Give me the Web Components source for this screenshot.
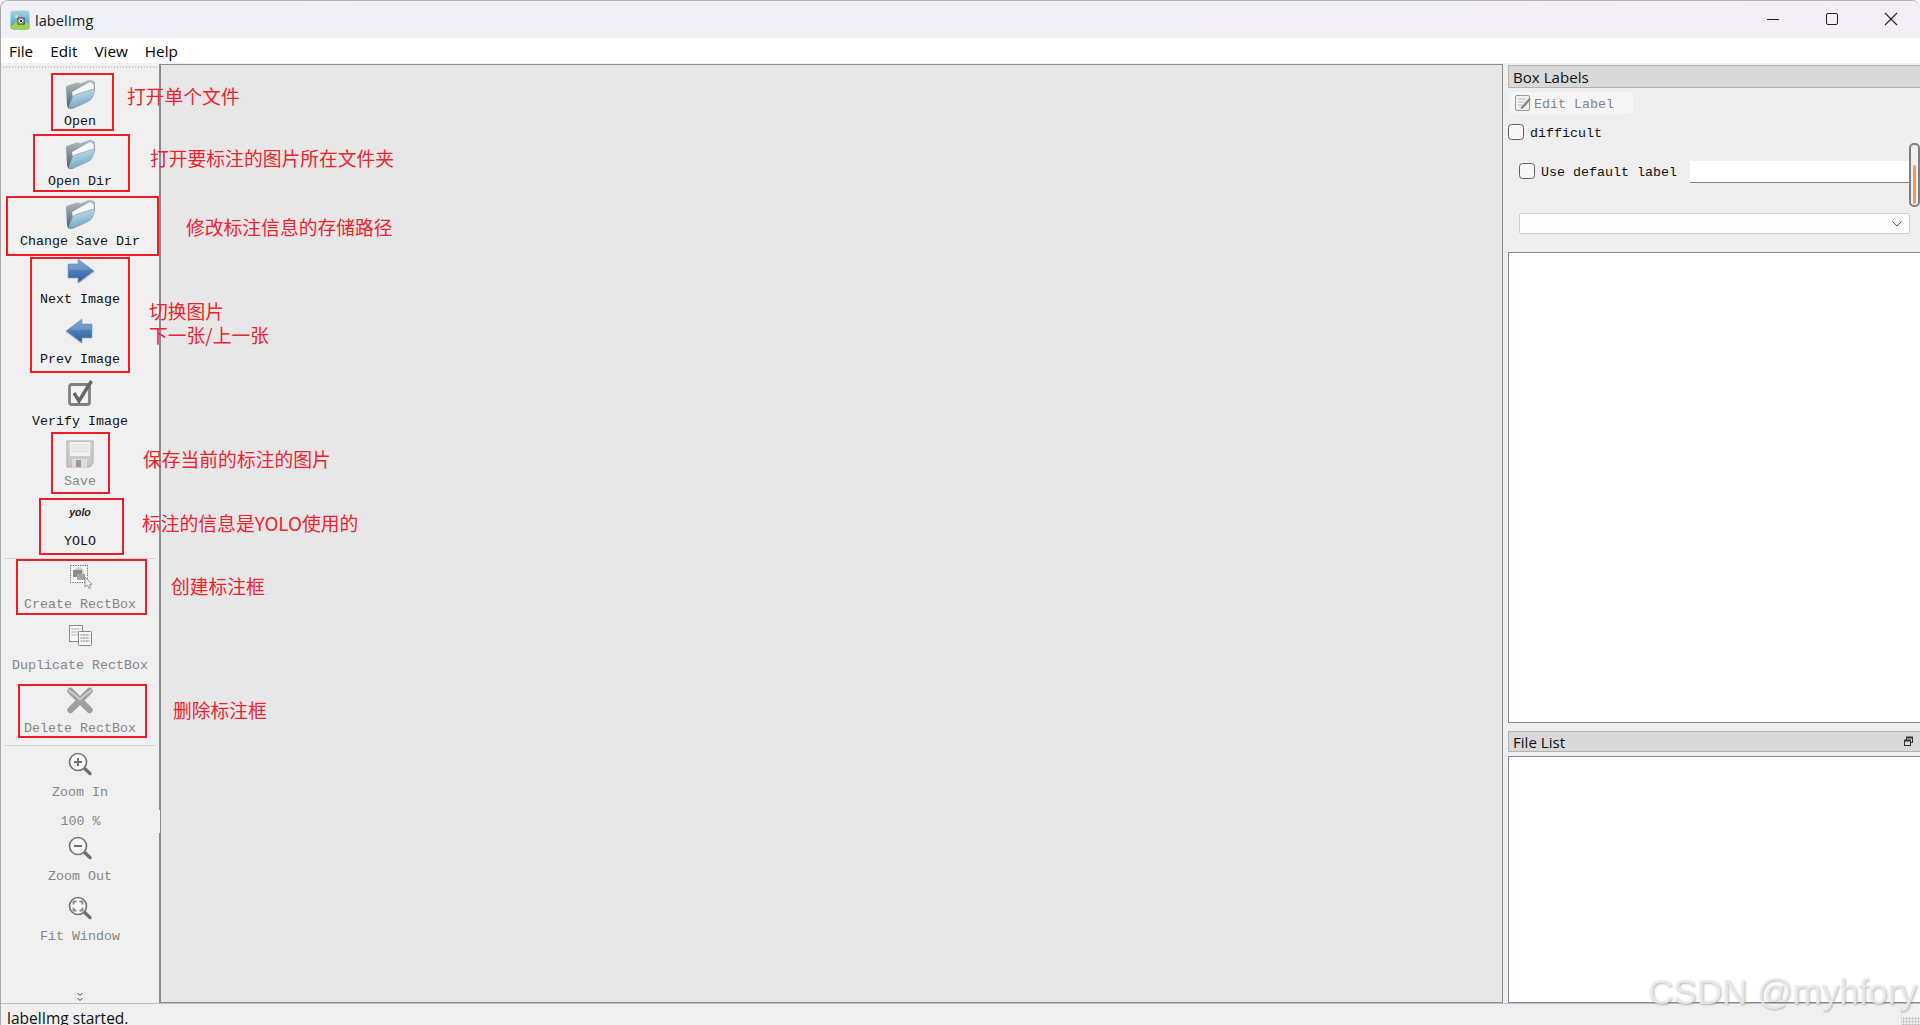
<!DOCTYPE html>
<html lang="zh"><head><meta charset="utf-8"><title>labelImg</title>
<style>
html,body{margin:0;height:100%;background:#fff;overflow:hidden}
body{font-family:"Open Sans","Noto Sans",sans-serif;color:#000}
</style></head><body>
<template id="t-app">
<style>
:host{display:flex;flex-direction:column;height:1025px;width:1920px;box-sizing:border-box;border-top:1px solid #b4b4b4;border-left:1px solid #a8a8a8;border-radius:8px 8px 0 0;overflow:hidden;position:relative;background:#f0f0f0}
.main{display:flex;flex:1;min-height:0}
</style>
<slot name="top"></slot><div class="main"><slot name="main"></slot></div><slot name="bottom"></slot><slot></slot>
</template>
<script>
const MAG=`<path d="M19.500 19.500 26 25.500" stroke="#6f6f6f" stroke-width="3.400" stroke-linecap="round"/><circle cx="14" cy="14" r="8.500" fill="#f7f7f7" stroke="#777" stroke-width="1.700"/>`;
const ICONS={
folder:`<defs><linearGradient id="b" x1="0" y1="0" x2="0.3" y2="1"><stop offset="0" stop-color="#d4e6f0"/><stop offset="1" stop-color="#6fa5c6"/></linearGradient><linearGradient id="g" x1="0" y1="0" x2="0" y2="1"><stop offset="0" stop-color="#b4bfc5"/><stop offset="1" stop-color="#4f5f68"/></linearGradient></defs>
<path d="M2 11Q2 8.500 5 8L13 5.500Q15 5 16 6.500L26 2.500 31 5 31 13 8 31.800Q3.500 32.500 3 28Z" fill="url(#g)"/><path d="M8 15 26 5 29.500 7 30 13 9 21Z" fill="#f6f8f8"/><path d="M7 32Q4 32.500 5 29L8 21Q9 18.500 12 17.500L28 12.500Q31.500 11.500 30.500 14.500L28 21Q27 23 24 24.500L10 31Z" fill="url(#b)" stroke="#7c97a6" stroke-width=".6"/>`,
next:`<defs><linearGradient id="a" x1="0" y1="0" x2="0" y2="1"><stop offset="0" stop-color="#6f9fd6"/><stop offset="1" stop-color="#2a5a9c"/></linearGradient></defs><path d="M5 12H15V6L31 17 15 29V23H5Z" fill="#000" opacity=".12"/><path d="M4 9H14V4L30 16 14 28V23H4Z" fill="url(#a)" stroke="#8aa3c2" stroke-width=".7"/><path d="M5 10H15L15 6 27 15H5Z" fill="#fff" opacity=".14"/>`,
prev:`<defs><linearGradient id="a" x1="0" y1="0" x2="0" y2="1"><stop offset="0" stop-color="#6f9fd6"/><stop offset="1" stop-color="#2a5a9c"/></linearGradient></defs><path d="M27 12H17V6L1 17 17 29V23H27Z" fill="#000" opacity=".12"/><path d="M28 9H18V4L2 16 18 28V23H28Z" fill="url(#a)" stroke="#8aa3c2" stroke-width=".7"/><path d="M27 10H17L17 6 5 15H27Z" fill="#fff" opacity=".14"/>`,
verify:`<rect x="5.500" y="7.500" width="20" height="20" rx="2.500" fill="#f3f3f3" stroke="#808080" stroke-width="2.800"/><path d="M10 16 15 24 27.500 4" fill="none" stroke="#666" stroke-width="3.400"/>`,
save:`<defs><linearGradient id="a" x1="0" y1="0" x2="0" y2="1"><stop offset="0" stop-color="#d6d6d6"/><stop offset="1" stop-color="#c4c4c4"/></linearGradient></defs><path d="M3 4H29V26L26 30H3Z" fill="url(#a)" stroke="#ababab"/><rect x="6" y="5" width="20" height="14" fill="#f2f2f2"/><path d="M7 8H25M7 11H25M7 14H25" stroke="#d8d8d8"/><rect x="8" y="22" width="15" height="8" fill="#ddd"/><rect x="12" y="23" width="5" height="7" fill="#999"/>`,
create:`<rect x="6.500" y="5.500" width="17" height="17" fill="#fbfbfb" stroke="#666" stroke-dasharray="1.200 1.200"/><circle cx="15" cy="12" r="5" fill="#d2d2d2"/><rect x="9" y="10" width="9" height="7" fill="#8c8c8c"/><rect x="13" y="14" width="8" height="6" fill="#a5a5a5"/><path d="M21 17V27L23.500 25 25 28.500 26.800 27.700 25.400 24.600 28 24.300Z" fill="#f5f5f5" stroke="#808080" stroke-width=".8"/>`,
duplicate:`<rect x="5.500" y="4.500" width="13" height="16" fill="#f6f6f6" stroke="#8b8b8b"/><path d="M7.500 8H16.500M7.500 11H16.500M7.500 14H16.500" stroke="#9c9c9c" stroke-dasharray="2 .7"/><rect x="14.500" y="10.500" width="13" height="14" rx="1" fill="#f8f8f8" stroke="#888"/><path d="M16.500 14H25.500M16.500 17H25.500M16.500 20H25.500" stroke="#777" stroke-dasharray="2 .7"/>`,
del:`<path d="M6.500 7 25.500 26M25.500 7 6.500 26" stroke="#a0a0a0" stroke-width="6.400" stroke-linecap="round"/><path d="M5 6.500 16 15 27 6.500" fill="none" stroke="#cdcdcd" stroke-width="2" stroke-linecap="round"/>`,
zin:MAG+`<path d="M14 10V18M10 14H18" stroke="#707070" stroke-width="2"/>`,
zout:MAG+`<path d="M10 14H18" stroke="#707070" stroke-width="2"/>`,
fit:MAG+`<path d="M9.500 12.500V9.500H12.500M15.500 9.500H18.500V12.500M18.500 15.500V18.500H15.500M12.500 18.500H9.500V15.500" fill="none" stroke="#8c8c8c" stroke-width="1.800"/>`
};
class LmIcon extends HTMLElement{connectedCallback(){if(this.shadowRoot)return;const s=this.attachShadow({mode:"open"});
s.innerHTML=`<style>:host{display:block;width:32px;height:32px}svg{display:block}</style><svg width="32" height="32" viewBox="0 0 32 32">${ICONS[this.getAttribute("name")]||""}</svg>`}}
customElements.define("lm-icon",LmIcon);

customElements.define("lm-app",class extends HTMLElement{constructor(){super();this.attachShadow({mode:"open"}).appendChild(document.getElementById("t-app").content.cloneNode(true))}});

customElements.define("lm-titlebar",class extends HTMLElement{constructor(){super();this.attachShadow({mode:"open"}).innerHTML=`<style>
:host{display:flex;align-items:center;height:37px;background:linear-gradient(90deg,#f0f1f7,#f2f0f7 50%,#f4eef6);padding-left:9px;font-size:14.67px;color:#1a1a1a;flex:none}
.t{margin-left:5px;flex:1}.btns{display:flex;width:177px;height:37px}
.btns div{flex:1;display:flex;align-items:center;justify-content:center;padding-bottom:1px}
svg{display:block}</style>
<svg width="20" height="20" viewBox="0 0 20 20"><defs><linearGradient id="s" x1="0" y1="0" x2="0" y2="1"><stop offset="0" stop-color="#a8d4ec"/><stop offset="1" stop-color="#3f93bf"/></linearGradient></defs><rect x=".5" y=".5" width="19" height="19" rx="3" fill="url(#s)"/><path d="M1 16 8 10 14 15 17 12 19.500 14V19.500H3Q1 19.500 1 17Z" fill="#a0cf52"/><circle cx="6.500" cy="6.500" r="1.400" fill="#f2e86a"/><rect x="8" y="8" width="6" height="6" fill="#fff" stroke="#333" stroke-width="1"/><path d="M9.500 9.500 12.500 12.500M12.500 9.500 9.500 12.500" stroke="#222"/></svg>
<span class="t"><slot></slot></span>
<div class="btns"><div><svg width="14" height="14"><path d="M1 7.500H13" stroke="#222" stroke-width="1"/></svg></div>
<div><svg width="14" height="14"><rect x="1.500" y="1.500" width="11" height="11" rx="1.500" fill="none" stroke="#222" stroke-width="1"/></svg></div>
<div><svg width="14" height="14"><path d="M1 1 13 13M13 1 1 13" stroke="#222" stroke-width="1.100"/></svg></div></div>`}});

customElements.define("lm-menubar",class extends HTMLElement{constructor(){super();this.attachShadow({mode:"open"}).innerHTML=`<style>
:host{display:flex;align-items:center;height:25px;background:#fff;padding-left:8px;gap:17px;font-size:15.300px;flex:none}
</style><slot></slot>`}});

customElements.define("lm-toolbar",class extends HTMLElement{constructor(){super();this.attachShadow({mode:"open"}).innerHTML=`<style>
:host{display:flex;flex-direction:column;width:158px;flex:none;background:#f0f0f0;padding-top:3px;box-sizing:border-box;height:100%;font:13.33px "Liberation Mono",monospace}
.h{height:2px;margin:0 2px;background-image:linear-gradient(90deg,#c4c4c4 50%,transparent 50%);background-size:3px 2px;flex:none}
.c{margin-top:auto;height:11px;display:flex;justify-content:center}
</style><div class="h"></div><slot></slot><div class="c"><svg width="8" height="10"><path d="M1.500 1 4 3.500 6.500 1M1.500 6 4 8.500 6.500 6" fill="none" stroke="#444"/></svg></div>`}});

customElements.define("lm-tool",class extends HTMLElement{connectedCallback(){if(this.shadowRoot)return;const h=this.getAttribute("h"),dis=this.hasAttribute("disabled");
this.attachShadow({mode:"open"}).innerHTML=`<style>
:host{display:flex;flex-direction:column;justify-content:flex-end;align-items:center;height:${h}px;flex:none;color:${dis?"#858585":"#111"}}
.i{height:32px;width:32px;margin-bottom:6px}.l{height:14px;line-height:14px;white-space:nowrap}
</style><div class="i"><slot></slot></div><div class="l">${this.getAttribute("label")}</div>`}});

customElements.define("lm-sep",class extends HTMLElement{constructor(){super();this.attachShadow({mode:"open"}).innerHTML=`<style>
:host{display:block;height:10px;margin:0 3px 0 3px;box-sizing:border-box;border-bottom:1px solid #d4d4d4;flex:none}</style>`}});

customElements.define("lm-spin",class extends HTMLElement{constructor(){super();this.attachShadow({mode:"open"}).innerHTML=`<style>
:host{display:flex;align-items:center;justify-content:center;height:23px;margin:10px -1px -1px 0;position:relative;z-index:1;background:#f0f0f0;border-top:1px solid #f3f3f3;border-bottom:1px solid #f3f3f3;box-sizing:border-box;color:#858585;flex:none}
</style><slot></slot>`}});

customElements.define("lm-canvas",class extends HTMLElement{constructor(){super();this.attachShadow({mode:"open"}).innerHTML=`<style>
:host{display:block;flex:none;width:1344px;box-sizing:border-box;margin-top:1px;background:#e7e7e7;border:1px solid #878b94;border-left-width:2px}
</style>`}});

customElements.define("lm-side",class extends HTMLElement{constructor(){super();this.attachShadow({mode:"open"}).innerHTML=`<style>
:host{display:flex;flex-direction:column;flex:1;min-width:0;box-sizing:border-box;padding:2px 0 0 5px;background:#efefef;font:13.33px "Liberation Mono",monospace}
</style><slot></slot>`}});

customElements.define("lm-dock",class extends HTMLElement{connectedCallback(){if(this.shadowRoot)return;
this.attachShadow({mode:"open"}).innerHTML=`<style>
:host{display:flex;flex-direction:column;position:relative}
:host([grow]){flex:1;min-height:0}
.t{height:23px;box-sizing:border-box;background:#d9d9d9;border:1px solid #b2b2b2;border-right:0;display:flex;align-items:center;padding-left:4px;font:15.100px "Open Sans",sans-serif;color:#111;flex:none}
.f{position:absolute;right:6px;top:5px}
:host([float]) .t{height:21px}
:host(:not([float])) .f{display:none}
</style><div class="t">${this.getAttribute("title-text")}<svg class="f" width="11" height="11"><rect x="3.500" y="1.500" width="6" height="5" fill="none" stroke="#333"/><path d="M3 1.500H10" stroke="#333" stroke-width="2"/><rect x="1.500" y="4.500" width="6" height="5" fill="#d9d9d9" stroke="#333"/><path d="M1 4.500H8" stroke="#333" stroke-width="2"/></svg></div><slot></slot>`}});

customElements.define("lm-edit-button",class extends HTMLElement{constructor(){super();this.attachShadow({mode:"open"}).innerHTML=`<style>
:host{display:flex;align-items:center;box-sizing:border-box;width:123px;height:22px;margin:4px 0 0 2px;background:#f6f6f6;border-radius:4px;padding-left:4px;color:#858585;flex:none}
svg{margin-right:2px}span{padding-top:2px}</style>
<svg width="18" height="18" viewBox="0 0 18 18"><rect x="1.500" y="1.500" width="14" height="15" rx="1.500" fill="#f2f2f2" stroke="#999"/><path d="M4 5H12M4 8H10M4 11H8" stroke="#bbb"/><path d="M7 13 15 4 17 5.500 9 14.500 6.500 15Z" fill="#8a8a8a"/></svg><span><slot></slot></span>`}});

customElements.define("lm-check",class extends HTMLElement{constructor(){super();this.attachShadow({mode:"open"}).innerHTML=`<style>
:host{display:flex;align-items:center;gap:6px;color:#111;flex:none}
.b{width:16px;height:16px;box-sizing:border-box;border:1px solid #5f5f5f;border-radius:3.500px;background:#f7f7f7;flex:none}
span{padding-top:2px}
</style><div class="b"></div><span><slot></slot></span>`}});

customElements.define("lm-field",class extends HTMLElement{constructor(){super();this.attachShadow({mode:"open"}).innerHTML=`<style>
:host{display:block;box-sizing:border-box;background:#fff;border-bottom:1px solid #808080;height:22px}
</style>`}});

customElements.define("lm-combo",class extends HTMLElement{constructor(){super();this.attachShadow({mode:"open"}).innerHTML=`<style>
:host{display:flex;align-items:center;justify-content:flex-end;box-sizing:border-box;height:21px;background:#fdfdfd;border:1px solid #cfcfcf;border-radius:2px;padding-right:6px}
</style><svg width="12" height="8"><path d="M1.500 1.500 6 6 10.500 1.500" fill="none" stroke="#555"/></svg>`}});

customElements.define("lm-list",class extends HTMLElement{constructor(){super();this.attachShadow({mode:"open"}).innerHTML=`<style>
:host{display:block;flex:1;min-height:0;box-sizing:border-box;background:#fff;border:1px solid #858896;border-right:0}
</style>`}});

customElements.define("lm-status",class extends HTMLElement{constructor(){super();this.attachShadow({mode:"open"}).innerHTML=`<style>
:host{display:block;position:relative;height:22px;flex:none;box-sizing:border-box;border-top:1px solid #bdbdbd;background:#f0f0f0;padding-left:6px;font-size:15.500px;line-height:28px;overflow:hidden;color:#111}
.g{position:absolute;right:0;bottom:0;width:18px;height:8px;background-image:radial-gradient(#bbb 45%,transparent 50%);background-size:3px 3px}
.v{position:absolute;right:18px;bottom:0;top:3px;width:1px;background:#dedede}
</style><slot></slot><div class="v"></div><div class="g"></div>`}});

customElements.define("lm-box",class extends HTMLElement{connectedCallback(){if(this.shadowRoot)return;const [x,y,w,h]=this.getAttribute("r").split(" ").map(Number);
this.attachShadow({mode:"open"}).innerHTML=`<style>:host{position:absolute;left:${x-1}px;top:${y-1}px;width:${w}px;height:${h}px;box-sizing:border-box;border:2px solid #ee1c25;z-index:5}</style>`}});

customElements.define("lm-note",class extends HTMLElement{connectedCallback(){if(this.shadowRoot)return;const [x,y]=this.getAttribute("p").split(" ");
this.attachShadow({mode:"open"}).innerHTML=`<style>:host{position:absolute;left:${x-1}px;top:${y-14}px;height:24px;font:18.800px/24px "Noto Sans CJK SC","Noto Sans",sans-serif;color:#f0222e;white-space:nowrap;z-index:5}</style><slot></slot>`}});

customElements.define("lm-watermark",class extends HTMLElement{constructor(){super();this.attachShadow({mode:"open"}).innerHTML=`<style>:host{position:absolute;right:3px;bottom:13px;font:35px "Liberation Sans",sans-serif;color:rgba(238,238,238,.85);text-shadow:1px 1px 2px rgba(120,120,120,.5);white-space:nowrap;z-index:6}</style><slot></slot>`}});
</script>

<lm-app>
  <lm-titlebar slot="top">labelImg</lm-titlebar>
  <lm-menubar slot="top"><span>File</span><span>Edit</span><span>View</span><span>Help</span></lm-menubar>
  <lm-toolbar slot="main">
    <lm-tool h="61" label="Open"><lm-icon name="folder"></lm-icon></lm-tool>
    <lm-tool h="60" label="Open Dir"><lm-icon name="folder"></lm-icon></lm-tool>
    <lm-tool h="60" label="Change Save Dir"><lm-icon name="folder"></lm-icon></lm-tool>
    <lm-tool h="58" label="Next Image"><lm-icon name="next"></lm-icon></lm-tool>
    <lm-tool h="60" label="Prev Image"><lm-icon name="prev"></lm-icon></lm-tool>
    <lm-tool h="62" label="Verify Image"><lm-icon name="verify"></lm-icon></lm-tool>
    <lm-tool h="60" label="Save" disabled><lm-icon name="save"></lm-icon></lm-tool>
    <lm-tool h="60" label="YOLO"><span style="display:block;text-align:center;font:italic bold 10.5px/30px 'Liberation Sans',sans-serif;color:#222">yolo</span></lm-tool>
    <lm-sep></lm-sep>
    <lm-tool h="53" label="Create RectBox" disabled><lm-icon name="create"></lm-icon></lm-tool>
    <lm-tool h="61" label="Duplicate RectBox" disabled><lm-icon name="duplicate"></lm-icon></lm-tool>
    <lm-tool h="63" label="Delete RectBox" disabled><lm-icon name="del"></lm-icon></lm-tool>
    <lm-sep></lm-sep>
    <lm-tool h="54" label="Zoom In" disabled><lm-icon name="zin"></lm-icon></lm-tool>
    <lm-spin>100 %</lm-spin>
    <lm-tool h="52" label="Zoom Out" disabled><lm-icon name="zout"></lm-icon></lm-tool>
    <lm-tool h="60" label="Fit Window" disabled><lm-icon name="fit"></lm-icon></lm-tool>
  </lm-toolbar>
  <lm-canvas slot="main"></lm-canvas>
  <lm-side slot="main">
    <lm-dock grow title-text="Box Labels">
      <lm-edit-button>Edit Label</lm-edit-button>
      <lm-check style="margin-top:10px;height:16px">difficult</lm-check>
      <div style="display:flex;align-items:flex-start;margin:21px 10px 0 11px;height:22px">
        <lm-check style="margin-top:2px;height:16px">Use default label</lm-check>
        <lm-field style="margin-left:13px;flex:1"></lm-field>
      </div>
      <lm-combo style="margin:30px 10px 0 11px"></lm-combo>
      <lm-list style="margin-top:18px"></lm-list>
    </lm-dock>
    <lm-dock float title-text="File List" style="height:272px;margin-top:8px">
      <lm-list style="margin-top:4px"></lm-list>
    </lm-dock>
  </lm-side>
  <lm-status slot="bottom">labelImg started.</lm-status>

  <lm-box r="51 73 63 58"></lm-box>
  <lm-box r="33 134 97 58"></lm-box>
  <lm-box r="6 196 153 60"></lm-box>
  <lm-box r="30 257 100 116"></lm-box>
  <lm-box r="51 432 59 62"></lm-box>
  <lm-box r="39 498 85 57"></lm-box>
  <lm-box r="16 559 131 56"></lm-box>
  <lm-box r="18 684 129 54"></lm-box>
  <lm-note p="127 97">打开单个文件</lm-note>
  <lm-note p="150 159">打开要标注的图片所在文件夹</lm-note>
  <lm-note p="186 228">修改标注信息的存储路径</lm-note>
  <lm-note p="149 312">切换图片</lm-note>
  <lm-note p="149 336">下一张/上一张</lm-note>
  <lm-note p="143 460">保存当前的标注的图片</lm-note>
  <lm-note p="142 524">标注的信息是YOLO使用的</lm-note>
  <lm-note p="171 587">创建标注框</lm-note>
  <lm-note p="173 711">删除标注框</lm-note>
  <svg style="position:absolute;left:1908px;top:142px;z-index:4" width="11" height="65"><rect x="1" y="1" width="9" height="62" rx="4" fill="#f0f0f0" stroke="#7f7f7f" stroke-width="2"/><rect x="4" y="22" width="3" height="39" rx="1.500" fill="#f59a56"/></svg>
  <lm-watermark>CSDN @myhfory</lm-watermark>
</lm-app>
</body></html>
